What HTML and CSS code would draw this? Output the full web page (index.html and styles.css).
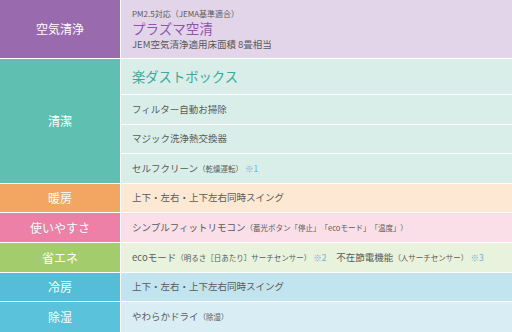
FILE: index.html
```html
<!DOCTYPE html>
<html lang="ja">
<head>
<meta charset="utf-8">
<link rel="stylesheet" href="styles.css">
</head>
<body>
<div class="spec">
  <div class="label purple r1">空気清浄</div>
  <div class="cell purple-l r1 stack">
    <div class="tiny">PM2.5対応（JEMA基準適合）</div>
    <div class="title t-purple">プラズマ空清</div>
    <div>JEM空気清浄適用床面積 8畳相当</div>
  </div>

  <div class="label teal r2">清潔</div>
  <div class="subrows r2">
    <div class="sub teal-l s1"><span class="title t-teal">楽ダストボックス</span></div>
    <div class="sub teal-l s2">フィルター自動お掃除</div>
    <div class="sub teal-l s3">マジック洗浄熱交換器</div>
    <div class="sub teal-l s4">セルフクリーン<span class="sm">（乾燥運転）</span><span class="note">※1</span></div>
  </div>

  <div class="label orange r3">暖房</div>
  <div class="cell orange-l r3">上下・左右・上下左右同時スイング</div>

  <div class="label pink r4">使いやすさ</div>
  <div class="cell pink-l r4">シンプルフィットリモコン<span class="sm">（蓄光ボタン「停止」「ecoモード」「温度」）</span></div>

  <div class="label green r5">省エネ</div>
  <div class="cell green-l r5">ecoモード<span class="sm">（明るさ［日あたり］サーチセンサー）</span><span class="note">※2</span><span class="sp"></span>不在節電機能<span class="sm">（人サーチセンサー）</span><span class="note">※3</span></div>

  <div class="label blue r6">冷房</div>
  <div class="cell blue-l r6">上下・左右・上下左右同時スイング</div>

  <div class="label blue2 r7">除湿</div>
  <div class="cell blue2-l r7">やわらかドライ<span class="sm">（除湿）</span></div>
</div>
</body>
</html>
```

FILE: styles.css
```css
html, body {
  margin: 0;
  padding: 0;
  background: #ffffff;
}

body {
  font-family: "Noto Sans CJK JP", "Noto Sans", sans-serif;
  color: #5a5a5a;
  text-spacing-trim: space-all;
}

.spec {
  width: 512px;
  display: grid;
  grid-template-columns: 120px 1fr;
  grid-template-rows: 58px 124px 28px 29px 29px 28px 30px;
  gap: 1px;
  background: #ffffff;
}

.label {
  display: flex;
  align-items: center;
  justify-content: center;
  color: #ffffff;
  font-size: 12px;
  line-height: 1;
}

.cell {
  display: flex;
  align-items: center;
  padding-left: 11px;
  font-size: 9.5px;
  line-height: 1;
  white-space: nowrap;
}

.stack {
  flex-direction: column;
  align-items: flex-start;
  justify-content: center;
  gap: 0;
}

.stack .tiny {
  font-size: 8px;
  line-height: 10px;
  margin-top: 1px;
}

.stack .title {
  font-size: 13.5px;
  line-height: 18px;
}

.stack div:last-child {
  line-height: 12px;
  margin-top: 1px;
}

.subrows {
  display: grid;
  grid-template-rows: 35px 29px 28px 29px;
  gap: 1px;
  background: #ffffff;
}

.sub {
  display: flex;
  align-items: center;
  padding-left: 11px;
  font-size: 9.5px;
  line-height: 1;
  white-space: nowrap;
}

.sub .title {
  font-size: 13.3px;
}

.t-purple { color: #8f55aa; }
.t-teal { color: #3aa99b; }

.sm {
  font-size: 7.5px;
}

.note {
  font-size: 8.5px;
  color: #6fb1e0;
  margin-left: 2px;
}

.sp {
  display: inline-block;
  width: 10px;
}

.purple { background: #9a6aaf; }
.purple-l { background: #e2d5ea; }
.teal { background: #5fbfb0; }
.teal-l { background: #d9eee9; }
.orange { background: #f2a661; }
.orange-l { background: #fde8d4; }
.pink { background: #ec80a6; }
.pink-l { background: #fbdfe8; }
.green { background: #a3cd6d; }
.green-l { background: #e9f2dc; }
.blue { background: #55bdd7; }
.blue-l { background: #c2e4ee; }
.blue2 { background: #5ac2da; }
.blue2-l { background: #d9edf4; }
```
